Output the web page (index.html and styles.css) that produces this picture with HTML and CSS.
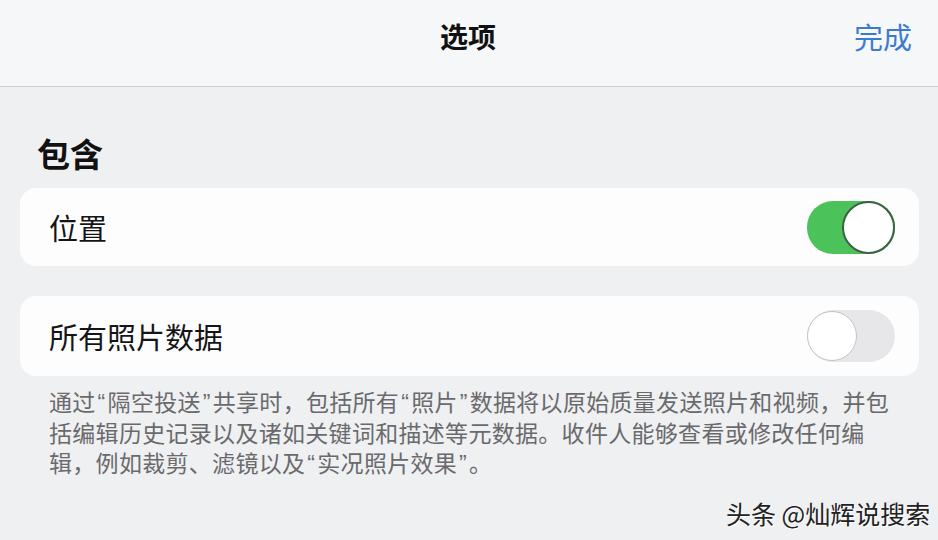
FILE: index.html
```html
<!DOCTYPE html>
<html lang="zh">
<head>
<meta charset="utf-8">
<link rel="stylesheet" href="styles.css">
</head>
<body>
<header class="nav">
  <div class="nav-title">选项</div>
  <div class="nav-done">完成</div>
</header>
<main class="content">
  <h2 class="section-title">包含</h2>
  <div class="card">
    <span class="row-label">位置</span>
    <span class="toggle on"><span class="knob"></span></span>
  </div>
  <div class="card card-second">
    <span class="row-label">所有照片数据</span>
    <span class="toggle"><span class="knob"></span></span>
  </div>
  <p class="footnote">通过<span class="q">“</span>隔空投送<span class="q">”</span>共享时，包括所有<span class="q">“</span>照片<span class="q">”</span>数据将以原始质量发送照片和视频，并包<br>括编辑历史记录以及诸如关键词和描述等元数据。收件人能够查看或修改任何编<br>辑，例如裁剪、滤镜以及<span class="q">“</span>实况照片效果<span class="q">”</span>。</p>
</main>
<div class="watermark">头条 @灿辉说搜索</div>
</body>
</html>
```

FILE: styles.css
```css
* { box-sizing: border-box; }
html, body { margin: 0; padding: 0; }
body {
  width: 938px;
  height: 540px;
  overflow: hidden;
  background: #eff0f2;
  font-family: "Noto Sans CJK SC", "Noto Sans", sans-serif;
  color: #111;
  position: relative;
}
.nav {
  height: 87px;
  background: #f6f7f8;
  border-bottom: 1px solid #cfd0d3;
  position: relative;
  display: flex;
  align-items: center;
  justify-content: center;
}
.nav-title {
  font-size: 28px;
  font-weight: 700;
  line-height: 36px;
  margin-top: -14px;
  margin-left: -2px;
}
.nav-done {
  position: absolute;
  right: 26px;
  top: 18px;
  font-size: 29px;
  line-height: 36px;
  color: #3b7bcf;
}
.content {
  padding: 0 19px 0 20px;
}
.section-title {
  margin: 46px 0 0 17px;
  font-size: 33px;
  font-weight: 700;
  line-height: 40px;
  height: 40px;
}
.card {
  margin-top: 15px;
  height: 78px;
  background: #fdfdfe;
  border-radius: 16px;
  display: flex;
  align-items: center;
  justify-content: space-between;
  padding: 0 24px 0 29px;
}
.card-second {
  margin-top: 30px;
  height: 80px;
}
.row-label {
  font-size: 29px;
  line-height: 36px;
  color: #151515;
}
.toggle {
  width: 88px;
  height: 52px;
  border-radius: 26px;
  background: #e7e7ea;
  position: relative;
  display: block;
}
.toggle.on {
  height: 53px;
  background: #4cc35a;
}
.knob {
  position: absolute;
  top: 1px;
  left: 0;
  width: 50px;
  height: 50px;
  border-radius: 50%;
  background: #fff;
  border: 1.5px solid #c4c4c6;
}
.toggle.on .knob {
  left: auto;
  right: 0;
  top: 0;
  width: 53px;
  height: 53px;
  border: 2px solid #3d6047;
}
.footnote {
  margin: 12px 0 0 29px;
  font-family: "Liberation Sans", "Noto Sans CJK SC", sans-serif;
  font-size: 23px;
  line-height: 30.5px;
  color: #6a6a6d;
  letter-spacing: 0.3px;
  white-space: nowrap;
}
.q {
  padding: 0 2px;
}
.watermark {
  position: absolute;
  left: 726px;
  top: 496px;
  font-size: 25px;
  line-height: 34px;
  color: #222;
  text-shadow: 1px 1px 0 #fff;
}
```
